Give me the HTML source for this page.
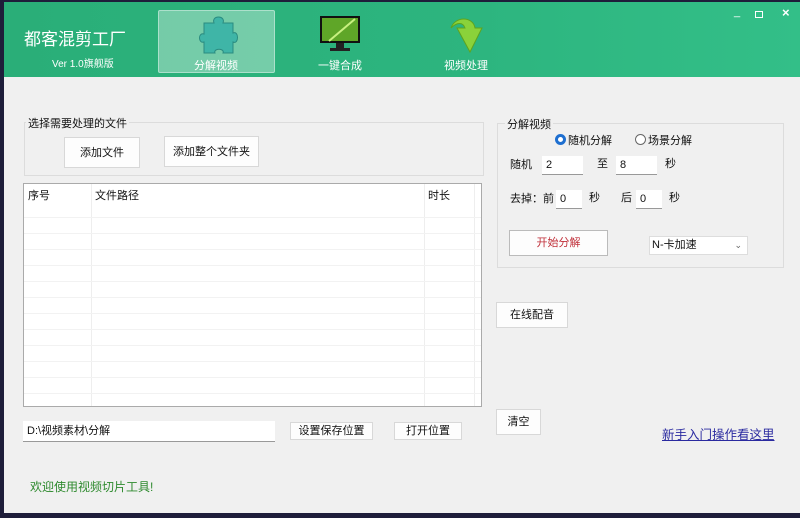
<!DOCTYPE html>
<html><head><meta charset="utf-8"><style>
*{margin:0;padding:0;box-sizing:border-box}
body{width:800px;height:518px;background:#1e1d3a;position:relative;overflow:hidden;font-family:"Liberation Sans","Noto Sans CJK SC",sans-serif;font-size:11px;color:#111}
.win{position:absolute;left:4px;top:2px;width:796px;height:511px;background:#f0f0f0}
.hdr{position:absolute;left:0;top:0;width:796px;height:75px;background:linear-gradient(90deg,#2aae78,#2db57f 60%,#33bf88)}
.a{position:absolute}
.t{color:#fff}
.btn{position:absolute;background:#fdfdfd;border:1px solid #d8d8d8;text-align:center;font-size:11px}
.grp{position:absolute;border:1px solid #dcdcdc}
.inp{position:absolute;background:#fff;border-bottom:1px solid #999;font-size:11px;padding-left:4px}
</style></head><body>
<div class="win">
<div class="hdr">
 <div class="a t" style="left:20px;top:23px;font-size:17px">都客混剪工厂</div>
 <div class="a t" style="left:48px;top:53px;font-size:10px">Ver 1.0旗舰版</div>
 <div class="a" style="left:154px;top:8px;width:117px;height:63px;background:rgba(255,255,255,0.35);border:1px solid rgba(255,255,255,0.4);border-radius:2px"></div>
 <svg class="a" style="left:194px;top:13px" width="44" height="40" viewBox="0 0 44 40"><path d="M6 8h10c-3-8 12-8 9 0h10v10c6-3 6 12 0 9v11H25c2-5-10-5-8 0H6V27c-6 2-6-10 0-8z" fill="#3fb5a7" stroke="#2a8b80"/></svg>
 <div class="a t" style="left:190px;top:55px;font-size:11px">分解视频</div>
 <svg class="a" style="left:315px;top:13px" width="42" height="38" viewBox="0 0 42 38"><rect x="1" y="1" width="40" height="27" fill="#111"/><rect x="3" y="3" width="36" height="23" fill="#5fa628"/><path d="M10 26L36 4" stroke="#c8f080" stroke-width="2"/><rect x="17" y="28" width="8" height="5" fill="#222"/><rect x="11" y="33" width="20" height="3" fill="#222"/></svg>
 <div class="a t" style="left:314px;top:55px;font-size:11px">一键合成</div>
 <svg class="a" style="left:443px;top:12px" width="38" height="42" viewBox="0 0 38 42"><path d="M4 14C8 2 26 2 28 14h7L23 38 10 14h8C16 8 10 8 4 14z" fill="#8ad23a" stroke="#5ea41f"/></svg>
 <div class="a t" style="left:440px;top:55px;font-size:11px">视频处理</div>
 <div class="a t" style="left:730px;top:4px;font-size:11px">_</div>
 <div class="a" style="left:751px;top:9px;width:8px;height:7px;border:1px solid #fff"></div>
 <div class="a t" style="left:778px;top:3px;font-size:13px;font-weight:bold">×</div>
</div>
<div class="grp" style="left:20px;top:120px;width:460px;height:54px"></div>
<div class="a" style="left:22px;top:113px;font-size:11px;background:#f0f0f0;padding:0 2px">选择需要处理的文件</div>
<div class="btn" style="left:60px;top:135px;width:76px;height:31px;line-height:30px">添加文件</div>
<div class="btn" style="left:160px;top:134px;width:95px;height:31px;line-height:30px">添加整个文件夹</div>
<div class="a" style="left:19px;top:181px;width:459px;height:224px;background:#fff;border:1px solid #aaa">
 <div class="a" style="left:67px;top:0;width:1px;height:222px;background:#eee"></div>
 <div class="a" style="left:400px;top:0;width:1px;height:222px;background:#eee"></div>
 <div class="a" style="left:450px;top:0;width:1px;height:222px;background:#eee"></div>
 <div class="a" style="left:4px;top:3px;font-size:11px">序号</div>
 <div class="a" style="left:71px;top:3px;font-size:11px">文件路径</div>
 <div class="a" style="left:404px;top:3px;font-size:11px">时长</div>
 <div class="a" style="left:0;top:33px;width:457px;height:190px;background:repeating-linear-gradient(180deg,#f2f2f2 0 1px,transparent 1px 16px)"></div>
</div>
<div class="grp" style="left:493px;top:121px;width:287px;height:145px"></div>
<div class="a" style="left:501px;top:114px;font-size:11px;background:#f0f0f0;padding:0 2px">分解视频</div>
<div class="a" style="left:551px;top:132px;width:11px;height:11px;border-radius:50%;border:3px solid #1e6fd0;background:#fff"></div>
<div class="a" style="left:564px;top:130px;font-size:11px">随机分解</div>
<div class="a" style="left:631px;top:132px;width:11px;height:11px;border-radius:50%;border:1px solid #666;background:#fff"></div>
<div class="a" style="left:644px;top:130px;font-size:11px">场景分解</div>
<div class="a" style="left:506px;top:154px;font-size:11px">随机</div>
<div class="inp" style="left:538px;top:154px;width:41px;height:19px;line-height:19px">2</div>
<div class="a" style="left:593px;top:153px;font-size:11px">至</div>
<div class="inp" style="left:612px;top:154px;width:41px;height:19px;line-height:19px">8</div>
<div class="a" style="left:661px;top:153px;font-size:11px">秒</div>
<div class="a" style="left:506px;top:188px;font-size:11px">去掉：前</div>
<div class="inp" style="left:552px;top:188px;width:26px;height:19px;line-height:19px">0</div>
<div class="a" style="left:585px;top:187px;font-size:11px">秒</div>
<div class="a" style="left:617px;top:187px;font-size:11px">后</div>
<div class="inp" style="left:632px;top:188px;width:26px;height:19px;line-height:19px">0</div>
<div class="a" style="left:665px;top:187px;font-size:11px">秒</div>
<div class="btn" style="left:505px;top:228px;width:99px;height:26px;line-height:24px;color:#c0303a;border-color:#bbb">开始分解</div>
<div class="a" style="left:645px;top:234px;width:99px;height:19px;background:#fff;border:1px solid #ddd;font-size:11px;line-height:17px;padding-left:2px">N-卡加速<span style="position:absolute;right:5px;font-size:9px;color:#666">⌄</span></div>
<div class="btn" style="left:492px;top:300px;width:72px;height:26px;line-height:25px">在线配音</div>
<div class="btn" style="left:492px;top:407px;width:45px;height:26px;line-height:25px">清空</div>
<div class="inp" style="left:19px;top:419px;width:252px;height:21px;line-height:20px;font-size:11px">D:\视频素材\分解</div>
<div class="btn" style="left:286px;top:420px;width:83px;height:18px;line-height:16px;font-size:11px">设置保存位置</div>
<div class="btn" style="left:390px;top:420px;width:68px;height:18px;line-height:16px;font-size:11px">打开位置</div>
<div class="a" style="left:658px;top:422px;font-size:12.5px;color:#2a2aa0;text-decoration:underline">新手入门操作看这里</div>
<div class="a" style="left:26px;top:476px;font-size:12px;color:#2e8a2e">欢迎使用视频切片工具!</div>
</div>
</body></html>
